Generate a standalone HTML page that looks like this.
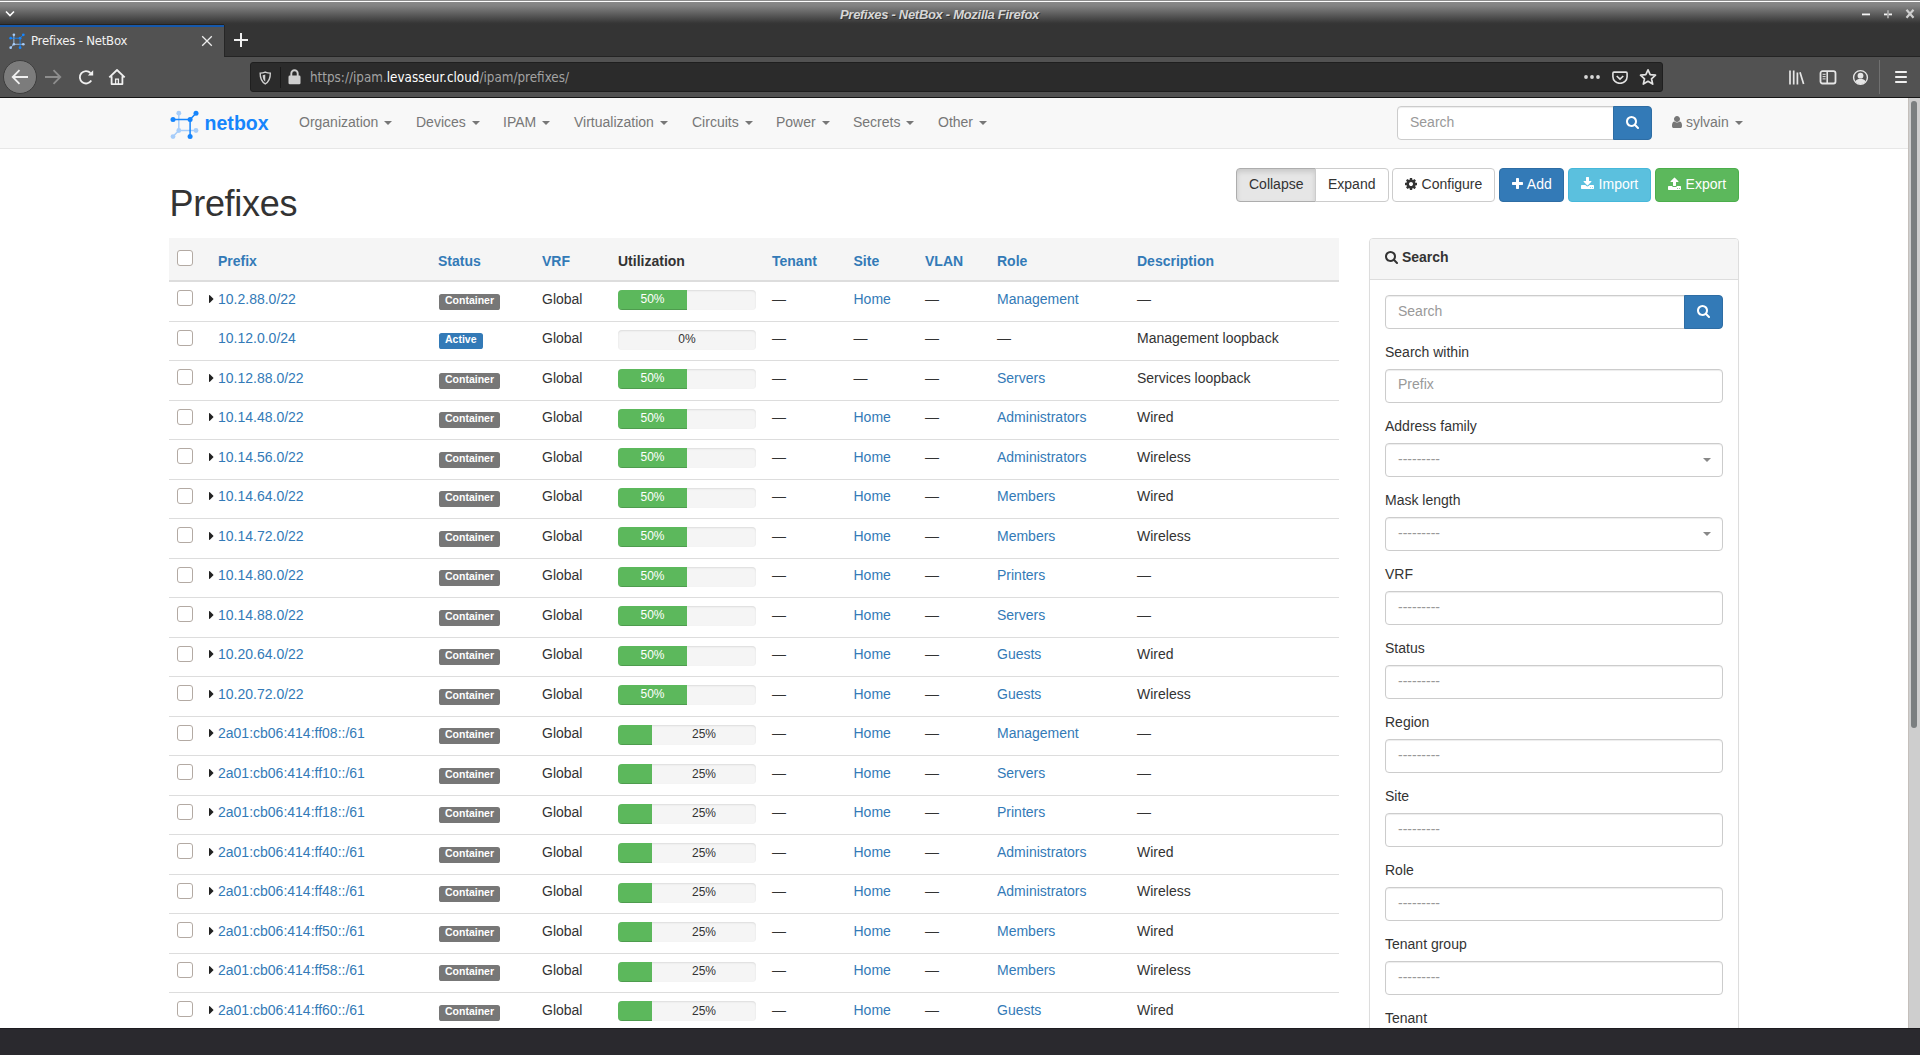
<!DOCTYPE html>
<html lang="en"><head><meta charset="utf-8"><title>Prefixes - NetBox</title>
<style>
*{box-sizing:border-box}
html,body{margin:0;padding:0}
body{width:1920px;height:1055px;overflow:hidden;position:relative;background:#fff;font-family:"Liberation Sans",sans-serif;font-size:14px;line-height:20px;color:#333}
a{color:#337ab7;text-decoration:none}
svg{display:block}
/* ---------- window chrome ---------- */
#titlebar{position:absolute;left:0;top:0;width:1920px;height:25px;background:linear-gradient(#898989 0px,#898989 2px,#818181 6px,#363636 23px,#343434 25px)}
#titlebar:before{content:"";position:absolute;left:0;top:0;width:100%;height:2px;background:linear-gradient(#8c8c8c 0,#8c8c8c 1px,#fff 1px,#fff 2px)}
#wtitle{position:absolute;left:0;top:6px;width:1879px;text-align:center;font:italic bold 13px/17px "Liberation Sans",sans-serif;color:#d6d6d6;text-shadow:1px 1px 0 #333;letter-spacing:-.3px}
#tabbar{position:absolute;left:0;top:25px;width:1920px;height:32px;background:#343434;z-index:2}
#tab{position:absolute;left:0;top:0;width:224px;height:32px;background:#525252;border-top:2px solid #1558ab;box-shadow:0 -1px 0 #25221e}
#tab .t{position:absolute;left:31px;top:5px;font:13px/18px "DejaVu Sans Condensed","DejaVu Sans","Liberation Sans",sans-serif;letter-spacing:-.2px;color:#f2f2f2;white-space:nowrap}
#toolbar{position:absolute;left:0;top:56px;width:1920px;height:41px;background:#525252}
#tbline{position:absolute;left:0;top:97px;width:1920px;height:1px;background:#161616}
#urlbar{position:absolute;left:250px;top:6px;width:1413px;height:30px;background:#2b2b2b;border:1px solid #1f1f1f;border-radius:3px}
#url{position:absolute;left:59px;top:5px;font:13.330px/20px "DejaVu Sans Condensed","DejaVu Sans","Liberation Sans",sans-serif;color:#a3a3a3;white-space:nowrap}
#url b{font-weight:normal;color:#fff}
.ico{position:absolute}
/* ---------- page ---------- */
#viewport{position:absolute;left:0;top:98px;width:1908px;height:930px;overflow:hidden;background:#fff}
#scroll{position:absolute;left:1908px;top:98px;width:12px;height:930px;background:#cecece;border-left:1px solid #c4bfbb}
#scroll i{position:absolute;left:2px;top:3px;width:6px;height:627px;border-radius:3px;background:#7b7f80}
#bottom{position:absolute;left:0;top:1028px;width:1920px;height:27px;background:#2a292e;border-top:1px solid #1d1c20}
#nav{position:absolute;left:0;top:0;width:1908px;height:51px;background:#f8f8f8;border-bottom:1px solid #e7e7e7}
#nav .m{position:absolute;top:14px;color:#777;white-space:nowrap}
.caret{display:inline-block;width:0;height:0;margin-left:2px;vertical-align:middle;border-top:4px solid;border-right:4px solid transparent;border-left:4px solid transparent}
#brand{position:absolute;left:204.500px;top:11px;font:bold 19.500px/28px "Liberation Sans",sans-serif;color:#1685fc;letter-spacing:.05px}
#nsearch{position:absolute;left:1397px;top:8px;width:217px;height:34px;border:1px solid #ccc;border-radius:4px 0 0 4px;background:#fff;box-shadow:inset 0 1px 1px rgba(0,0,0,.075);color:#999;padding:5px 12px 7px}
#nsbtn{position:absolute;left:1613px;top:8px;width:39px;height:34px;background:#337ab7;border:1px solid #2e6da4;border-radius:0 4px 4px 0}
h1.title{position:absolute;left:169.500px;top:85.500px;letter-spacing:-.3px;margin:0;font-size:36px;line-height:40px;font-weight:500;font-weight:normal;color:#333}
.btns{position:absolute;top:70px;left:0}
.btn{position:absolute;top:0;height:34px;padding:5px 12px 7px;border:1px solid transparent;border-radius:4px;white-space:nowrap;font-size:14px;line-height:20px;color:#333}
.fa{display:inline-block;vertical-align:-2px;fill:currentColor}
.btn .fa{margin-right:.7px}
.btn-default{background:#fff;border-color:#ccc}
.btn-default.active{background:#e6e6e6;border-color:#adadad;box-shadow:inset 0 3px 5px rgba(0,0,0,.125)}
.btn-primary{background:#337ab7;border-color:#2e6da4;color:#fff}
.btn-info{background:#5bc0de;border-color:#46b8da;color:#fff}
.btn-success{background:#5cb85c;border-color:#4cae4c;color:#fff}
/* ---------- table ---------- */
#tbl{position:absolute;left:169px;top:0;width:1170px}
.thead{position:absolute;left:0;top:140px;width:1170px;height:44px;background:#f5f5f5;border-bottom:2px solid #ddd;font-weight:bold}
.tr{position:absolute;left:0;width:1170px;border-bottom:1px solid #ddd}
.c{position:absolute;top:7px;white-space:nowrap}
.tr.odd .c{top:6px}
.tr .c.cb,.tr .c.ut,.tr.odd .c.cb,.tr.odd .c.ut{top:8px}
.thead .c{top:13px}
.c.cb{left:8px}
.c.pfx{left:49px}
.c.st{left:269px}
.c.vrf{left:373px}
.c.ut{left:449px;width:138px}
.c.ten{left:603px}
.c.site{left:684.500px}
.c.vlan{left:756px}
.c.role{left:828px}
.c.desc{left:968px}
.chk{display:block;width:16px;height:16px;border:1px solid #b3aaa3;border-radius:3px;background:#fff;margin-top:0px;box-shadow:inset 0 0 0 1px rgba(255,255,255,.8)}
.thead .chk{margin-top:-1px}
.caret-r{position:absolute;left:-9px;top:5px;width:0;height:0;border-left:5px solid #222;border-top:5px solid transparent;border-bottom:5px solid transparent}
.label{display:block;position:absolute;left:1px;top:5px;padding:1px 6px 4.7px;font-size:10.5px;font-weight:bold;line-height:10.5px;color:#fff;border-radius:2.6px}
.label-default{background:#777}
.label-primary{background:#337ab7}
.progress{position:relative;width:138px;height:20px;background:#f5f5f5;border-radius:4px;box-shadow:inset 0 1px 2px rgba(0,0,0,.1);overflow:hidden;font-size:12px;line-height:19px;text-align:center}
.progress .bar{position:absolute;left:0;top:0;height:20px;background:#5cb85c;color:#fff;box-shadow:inset 0 -1px 0 rgba(0,0,0,.15)}
.progress .zero{color:#333}
.progress .p25{position:absolute;left:74px;top:1px;color:#333}
.tr.odd .progress .p25{top:0}
/* ---------- side panel ---------- */
#panel{position:absolute;left:1369px;top:140px;width:370px;height:900px;border:1px solid #ddd;border-radius:4px;background:#fff;box-shadow:0 1px 1px rgba(0,0,0,.05)}
#panel .hd{height:41px;background:#f5f5f5;border-bottom:1px solid #ddd;border-radius:3px 3px 0 0;padding:8px 15px 12px;font-weight:bold;color:#333}
#panel .fg{position:absolute;left:15px;width:338px}
#panel label{display:block;position:absolute;left:0;top:-2px;font-weight:normal;white-space:nowrap}
.inp{position:absolute;left:0;top:25px;width:338px;height:34px;border:1px solid #ccc;border-radius:4px;background:#fff;box-shadow:inset 0 1px 1px rgba(0,0,0,.075);padding:4px 12px 8px;color:#999}
.inp .arr{position:absolute;right:11px;top:14px;width:0;height:0;border-top:4px solid #888;border-left:4px solid transparent;border-right:4px solid transparent}

</style></head>
<body>
<svg width="0" height="0" style="position:absolute">
<defs>
<path id="fa-search" d="M1216 832q0-185-131.500-316.500t-316.500-131.500-316.500 131.500-131.500 316.500 131.500 316.500 316.500 131.500 316.500-131.500 131.500-316.500zM1728 1664q0 52-38 90t-90 38q-54 0-90-38l-343-342q-179 124-399 124-143 0-273.500-55.500t-225-150-150-225-55.500-273.500 55.500-273.500 150-225 225-150 273.500-55.500 273.500 55.500 225 150 150 225 55.500 273.500q0 220-124 399l343 343q37 37 37 90z"/>
<path id="fa-plus" d="M1600 736v192q0 40-28 68t-68 28h-416v416q0 40-28 68t-68 28h-192q-40 0-68-28t-28-68v-416h-416q-40 0-68-28t-28-68v-192q0-40 28-68t68-28h416v-416q0-40 28-68t68-28h192q40 0 68 28t28 68v416h416q40 0 68 28t28 68z"/>
<path id="fa-cog" d="M1152 896q0-106-75-181t-181-75-181 75-75 181 75 181 181 75 181-75 75-181zm512-109v222q0 12-8 23t-20 13l-185 28q-19 54-39 91 35 50 107 138 10 12 10 25t-9 23q-27 37-99 108t-94 71q-12 0-26-9l-138-108q-44 23-91 38-16 136-29 186-7 28-36 28h-222q-14 0-24.500-8.500t-11.500-21.500l-28-184q-49-16-90-37l-141 107q-10 9-25 9-14 0-25-11-126-114-165-168-7-10-7-23 0-12 8-23 15-21 51-66.500t54-70.500q-27-50-41-99l-183-27q-13-2-21-12.500t-8-23.500v-222q0-12 8-23t19-13l186-28q14-46 39-92-40-57-107-138-10-12-10-24 0-10 9-23 26-36 98.500-107.500t94.500-71.500q13 0 26 10l138 107q44-23 91-38 16-136 29-186 7-28 36-28h222q14 0 24.500 8.500t11.500 21.500l28 184q49 16 90 37l142-107q9-9 24-9 13 0 25 10 129 119 165 170 7 8 7 22 0 12-8 23-15 21-51 66.500t-54 70.500q26 50 41 98l183 28q13 2 21 12.500t8 23.500z"/>
<path id="fa-download" d="M1344 1344q0-26-19-45t-45-19-45 19-19 45 19 45 45 19 45-19 19-45zm256 0q0-26-19-45t-45-19-45 19-19 45 19 45 45 19 45-19 19-45zm128-224v320q0 40-28 68t-68 28h-1472q-40 0-68-28t-28-68v-320q0-40 28-68t68-28h465l135 136q58 56 136 56t136-56l136-136h464q40 0 68 28t28 68zm-325-569q17 41-14 70l-448 448q-18 19-45 19t-45-19l-448-448q-31-29-14-70 17-39 59-39h256v-448q0-26 19-45t45-19h256q26 0 45 19t19 45v448h256q42 0 59 39z"/>
<path id="fa-upload" d="M1344 1472q0-26-19-45t-45-19-45 19-19 45 19 45 45 19 45-19 19-45zm256 0q0-26-19-45t-45-19-45 19-19 45 19 45 45 19 45-19 19-45zm128-224v320q0 40-28 68t-68 28h-1472q-40 0-68-28t-28-68v-320q0-40 28-68t68-28h427q21 56 70.500 92t110.500 36h256q61 0 110.500-36t70.500-92h427q40 0 68 28t28 68zm-325-648q-17 40-59 40h-256v448q0 26-19 45t-45 19h-256q-26 0-45-19t-19-45v-448h-256q-42 0-59-40-17-39 14-69l448-448q18-19 45-19t45 19l448 448q31 30 14 69z"/>
<path id="fa-user" d="M1536 1399q0 109-62.500 187t-150.500 78h-854q-88 0-150.500-78t-62.500-187q0-85 8.500-160.500t31.500-152 58.500-131 94-89 134.500-34.500q131 128 313 128t313-128q76 0 134.500 34.500t94 89 58.500 131 31.500 152 8.500 160.500zm-256-887q0 159-112.500 271.500t-271.500 112.500-271.500-112.500-112.500-271.500 112.500-271.500 271.500-112.500 271.500 112.500 112.500 271.500z"/>
<path id="fa-caretr" d="M1152 896q0 26-19 45l-448 448q-19 19-45 19t-45-19-19-45v-896q0-26 19-45t45-19 45 19l448 448q19 19 19 45z"/>
<g id="i-logo"><g stroke-width="1.500" fill="none"><path d="M8.800 3.200v17.300h17.200M8.800 20.500l-5.800 6.100" stroke="#a6cdfa"/><path d="M3 9.500h17.100v17.100M20.100 9.500l5.900-6.300" stroke="#1685fc"/></g><g fill="#a6cdfa"><circle cx="8.800" cy="3.200" r="2.400"/><circle cx="8.800" cy="20.500" r="2.400"/><circle cx="26" cy="20.500" r="2.400"/><circle cx="3" cy="26.600" r="2.400"/></g><g fill="#1685fc"><circle cx="3" cy="9.500" r="2.500"/><circle cx="20.100" cy="9.500" r="2.500"/><circle cx="26" cy="3.200" r="2.500"/><circle cx="20.100" cy="26.600" r="2.500"/></g></g>
</defs>
</svg>
<div id="titlebar">
<svg class="ico" style="left:4px;top:9px" width="12" height="10" viewBox="0 0 12 10"><path d="M2 2.500l4 4l4-4" fill="none" stroke="#fff" stroke-width="1.600"/></svg>
<div id="wtitle">Prefixes - NetBox - Mozilla Firefox</div>
<svg class="ico" style="left:1858px;top:8px" width="60" height="12" viewBox="0 0 60 12"><g fill="none" stroke="#f4f4f4" stroke-width="1.800"><path d="M4 6.400h8"/><path d="M26 6.400h8"/><path d="M30 2.300v8" stroke="#a8a8a8"/><path d="M48.500 1.800l7 8M55.500 1.800l-7 8" stroke="#cfcfcf" stroke-width="2.200"/></g></svg>
</div>
<div id="tabbar">
<div id="tab">
<svg class="ico" style="left:9px;top:6px" width="16" height="16.500" viewBox="0 0 29 30"><use href="#i-logo"/></svg>
<span class="t">Prefixes - NetBox</span>
<svg class="ico" style="left:201px;top:8px" width="12" height="12" viewBox="0 0 12 12"><path d="M1.200 1.200l9.600 9.600M10.800 1.200l-9.600 9.600" stroke="#ededed" stroke-width="1.300" fill="none"/></svg>
</div>
<i style="position:absolute;left:224px;top:0;width:1px;height:32px;background:#262626"></i>
<svg class="ico" style="left:233px;top:7px" width="16" height="16" viewBox="0 0 16 16"><path d="M1 8h14M8 1v14" stroke="#f0f0f0" stroke-width="2" fill="none"/></svg>
<i style="position:absolute;left:225px;top:31px;width:1695px;height:1px;background:#242424"></i>
</div>
<div id="toolbar">
<i style="position:absolute;left:3px;top:4px;width:34px;height:34px;border-radius:50%;background:#7c7c7c;border:1px solid #3d3d3d"></i>
<svg class="ico" style="left:11px;top:13px" width="18" height="16" viewBox="0 0 18 16"><path d="M17 8h-15M8.500 1.200l-6.800 6.800l6.800 6.800" fill="none" stroke="#f0f0f0" stroke-width="1.800"/></svg>
<svg class="ico" style="left:44px;top:13px" width="18" height="16" viewBox="0 0 18 16"><path d="M1 8h15M9.500 1.200l6.800 6.800l-6.800 6.800" fill="none" stroke="#8d8d8d" stroke-width="1.800"/></svg>
<svg class="ico" style="left:77px;top:12px" width="18" height="18" viewBox="0 0 18 18"><path d="M14.300 12.600a6.200 6.200 0 1 1-.8-7.600" fill="none" stroke="#f0f0f0" stroke-width="1.800"/><path d="M16.200 2.200v5.400h-5.400z" fill="#f0f0f0"/></svg>
<svg class="ico" style="left:108px;top:12px" width="18" height="18" viewBox="0 0 18 18"><path d="M1.300 9.300l7.700-7.300l7.700 7.300M3.600 8.200v7.900h10.800v-7.900" fill="none" stroke="#f0f0f0" stroke-width="1.800" stroke-linejoin="round"/><path d="M7.600 16v-4.800h2.800v4.800" fill="none" stroke="#f0f0f0" stroke-width="1.300"/></svg>
<div id="urlbar">
<svg class="ico" style="left:8px;top:8px" width="12.500" height="14" viewBox="0 0 14 16"><path d="M7 1.200c2 .9 3.800 1.200 5.800 1.200c.1 5.600-1.500 10-5.800 12.400c-4.300-2.400-5.900-6.800-5.800-12.400c2 0 3.800-.3 5.800-1.200z" fill="none" stroke="#cfcfcf" stroke-width="1.600"/><path d="M7 4v8.200c-2-1.400-2.900-4-3-7.400c1.100-.1 2-.3 3-.8z" fill="#cfcfcf"/></svg>
<i style="position:absolute;left:29px;top:4px;width:1px;height:21px;background:#1a1a1a"></i>
<svg class="ico" style="left:37px;top:6px" width="13" height="16" viewBox="0 0 13 16"><path d="M3.300 7v-2.500a3.200 3.200 0 0 1 6.400 0v2.500" fill="none" stroke="#cfcfcf" stroke-width="1.900"/><rect x=".5" y="6.600" width="12" height="8.600" rx="1.300" fill="#cfcfcf"/></svg>
<span id="url">https://ipam.<b>levasseur.cloud</b>/ipam/prefixes/</span>
<svg class="ico" style="left:1332px;top:11px" width="20" height="6" viewBox="0 0 20 6"><g fill="#d8d8d8"><circle cx="3" cy="3" r="1.900"/><circle cx="9" cy="3" r="1.900"/><circle cx="15" cy="3" r="1.900"/></g></svg>
<svg class="ico" style="left:1361px;top:8px" width="16" height="13.300" viewBox="0 0 18 15"><path d="M2.200 1.300h13.600a1.200 1.200 0 0 1 1.200 1.200v4a8 7.400 0 0 1-16 0v-4a1.200 1.200 0 0 1 1.200-1.200z" fill="none" stroke="#e2e2e2" stroke-width="1.800"/><path d="M5.300 5.600l3.700 3.600l3.700-3.600" fill="none" stroke="#e2e2e2" stroke-width="1.800"/></svg>
<svg class="ico" style="left:1388px;top:5px" width="18" height="18" viewBox="0 0 18 18"><path d="M9 1.800l2.200 4.900l5.300.5l-4 3.600l1.200 5.300l-4.700-2.800l-4.700 2.800l1.200-5.300l-4-3.600l5.300-.5z" fill="none" stroke="#e2e2e2" stroke-width="1.700" stroke-linejoin="round"/></svg>
</div>
<svg class="ico" style="left:1788px;top:14px" width="18" height="15" viewBox="0 0 18 15"><path d="M2 .4v14M5.700 .4v14M9.400 2.400v12M12 2.200l3.600 11.800" fill="none" stroke="#e6e6e6" stroke-width="1.700"/></svg>
<svg class="ico" style="left:1819px;top:14px" width="18" height="15" viewBox="0 0 18 15"><rect x="1.500" y="1.200" width="15" height="12.300" rx="2" fill="none" stroke="#e6e6e6" stroke-width="1.800"/><path d="M8.200 1.200v12.300" stroke="#e6e6e6" stroke-width="1.600"/><path d="M3.600 4.300h3M3.600 6.600h3M3.600 8.900h3" stroke="#e6e6e6" stroke-width="1"/></svg>
<svg class="ico" style="left:1852px;top:13px" width="17" height="17" viewBox="0 0 17 17"><circle cx="8.500" cy="8.500" r="6.900" fill="none" stroke="#e6e6e6" stroke-width="1.400"/><circle cx="8.500" cy="6.700" r="2.900" fill="#e6e6e6"/><path d="M3.300 12.600c1-2 2.800-2.600 5.200-2.600s4.200.6 5.200 2.600a6.600 6.600 0 0 1-10.400 0z" fill="#e6e6e6"/></svg>
<i style="position:absolute;left:1879px;top:4px;width:1px;height:34px;background:#707070"></i>
<svg class="ico" style="left:1894px;top:14px" width="14" height="14" viewBox="0 0 14 14"><path d="M1.200 2h11.600M1.200 7h11.600M1.200 12h11.600" stroke="#f0f0f0" stroke-width="2" fill="none"/></svg>
</div>
<div id="tbline"></div>

<div id="viewport">
<div id="nav">
<svg class="ico" style="left:169.500px;top:12px" width="29" height="30" viewBox="0 0 29 30"><use href="#i-logo"/></svg>
<span id="brand">netbox</span>
<span class="m" style="left:299px">Organization <i class="caret"></i></span>
<span class="m" style="left:416px">Devices <i class="caret"></i></span>
<span class="m" style="left:503px">IPAM <i class="caret"></i></span>
<span class="m" style="left:574px">Virtualization <i class="caret"></i></span>
<span class="m" style="left:692px">Circuits <i class="caret"></i></span>
<span class="m" style="left:776px">Power <i class="caret"></i></span>
<span class="m" style="left:853px">Secrets <i class="caret"></i></span>
<span class="m" style="left:938px">Other <i class="caret"></i></span>
<div id="nsearch">Search</div>
<div id="nsbtn"><svg class="fa" viewBox="64 0 1664 1792" width="13" height="14" style="position:absolute;left:12px;top:8px;fill:#fff"><use href="#fa-search"/></svg></div>
<span class="m" style="left:1672px"><svg class="fa" viewBox="256 0 1280 1792" width="10" height="14" style="fill:#777"><use href="#fa-user"/></svg> sylvain <i class="caret"></i></span>
</div>

<h1 class="title">Prefixes</h1>
<div class="btns">
<a class="btn btn-default active" style="left:1236px;width:80px;border-radius:4px 0 0 4px">Collapse</a><a class="btn btn-default" style="left:1315px;width:74px;border-radius:0 4px 4px 0">Expand</a>
<a class="btn btn-default" style="left:1392px;width:103px"><svg class="fa" viewBox="128 0 1536 1792" width="12" height="14"><use href="#fa-cog"/></svg> Configure</a>
<a class="btn btn-primary" style="left:1499px;width:65px"><svg class="fa" viewBox="192 0 1408 1792" width="11" height="14"><use href="#fa-plus"/></svg> Add</a>
<a class="btn btn-info" style="left:1568px;width:83px"><svg class="fa" viewBox="64 0 1664 1792" width="13" height="14"><use href="#fa-download"/></svg> Import</a>
<a class="btn btn-success" style="left:1655px;width:84px"><svg class="fa" viewBox="64 0 1664 1792" width="13" height="14"><use href="#fa-upload"/></svg> Export</a>
</div>
<div id="tbl">
<div class="thead">
<span class="c cb"><i class="chk"></i></span><span class="c pfx"><a>Prefix</a></span><span class="c st"><a>Status</a></span><span class="c vrf"><a>VRF</a></span><span class="c ut">Utilization</span><span class="c ten"><a>Tenant</a></span><span class="c site"><a>Site</a></span><span class="c vlan"><a>VLAN</a></span><span class="c role"><a>Role</a></span><span class="c desc"><a>Description</a></span>
</div>
<div class="tr" style="top:184px;height:40px">
<span class="c cb"><i class="chk"></i></span><span class="c pfx"><svg class="fa" viewBox="576 0 640 1792" width="5" height="14" style="position:absolute;left:-9px;top:3px;fill:#222"><use href="#fa-caretr"/></svg><a>10.2.88.0/22</a></span><span class="c st"><span class="label label-default">Container</span></span><span class="c vrf">Global</span><span class="c ut"><div class="progress"><div class="bar" style="width:50%">50%</div></div></span><span class="c ten">—</span><span class="c site"><a>Home</a></span><span class="c vlan">—</span><span class="c role"><a>Management</a></span><span class="c desc">—</span>
</div>
<div class="tr odd" style="top:224px;height:39px">
<span class="c cb"><i class="chk"></i></span><span class="c pfx"><a>10.12.0.0/24</a></span><span class="c st"><span class="label label-primary">Active</span></span><span class="c vrf">Global</span><span class="c ut"><div class="progress"><span class="zero">0%</span></div></span><span class="c ten">—</span><span class="c site">—</span><span class="c vlan">—</span><span class="c role">—</span><span class="c desc">Management loopback</span>
</div>
<div class="tr" style="top:263px;height:40px">
<span class="c cb"><i class="chk"></i></span><span class="c pfx"><svg class="fa" viewBox="576 0 640 1792" width="5" height="14" style="position:absolute;left:-9px;top:3px;fill:#222"><use href="#fa-caretr"/></svg><a>10.12.88.0/22</a></span><span class="c st"><span class="label label-default">Container</span></span><span class="c vrf">Global</span><span class="c ut"><div class="progress"><div class="bar" style="width:50%">50%</div></div></span><span class="c ten">—</span><span class="c site">—</span><span class="c vlan">—</span><span class="c role"><a>Servers</a></span><span class="c desc">Services loopback</span>
</div>
<div class="tr odd" style="top:303px;height:39px">
<span class="c cb"><i class="chk"></i></span><span class="c pfx"><svg class="fa" viewBox="576 0 640 1792" width="5" height="14" style="position:absolute;left:-9px;top:3px;fill:#222"><use href="#fa-caretr"/></svg><a>10.14.48.0/22</a></span><span class="c st"><span class="label label-default">Container</span></span><span class="c vrf">Global</span><span class="c ut"><div class="progress"><div class="bar" style="width:50%">50%</div></div></span><span class="c ten">—</span><span class="c site"><a>Home</a></span><span class="c vlan">—</span><span class="c role"><a>Administrators</a></span><span class="c desc">Wired</span>
</div>
<div class="tr" style="top:342px;height:40px">
<span class="c cb"><i class="chk"></i></span><span class="c pfx"><svg class="fa" viewBox="576 0 640 1792" width="5" height="14" style="position:absolute;left:-9px;top:3px;fill:#222"><use href="#fa-caretr"/></svg><a>10.14.56.0/22</a></span><span class="c st"><span class="label label-default">Container</span></span><span class="c vrf">Global</span><span class="c ut"><div class="progress"><div class="bar" style="width:50%">50%</div></div></span><span class="c ten">—</span><span class="c site"><a>Home</a></span><span class="c vlan">—</span><span class="c role"><a>Administrators</a></span><span class="c desc">Wireless</span>
</div>
<div class="tr odd" style="top:382px;height:39px">
<span class="c cb"><i class="chk"></i></span><span class="c pfx"><svg class="fa" viewBox="576 0 640 1792" width="5" height="14" style="position:absolute;left:-9px;top:3px;fill:#222"><use href="#fa-caretr"/></svg><a>10.14.64.0/22</a></span><span class="c st"><span class="label label-default">Container</span></span><span class="c vrf">Global</span><span class="c ut"><div class="progress"><div class="bar" style="width:50%">50%</div></div></span><span class="c ten">—</span><span class="c site"><a>Home</a></span><span class="c vlan">—</span><span class="c role"><a>Members</a></span><span class="c desc">Wired</span>
</div>
<div class="tr" style="top:421px;height:40px">
<span class="c cb"><i class="chk"></i></span><span class="c pfx"><svg class="fa" viewBox="576 0 640 1792" width="5" height="14" style="position:absolute;left:-9px;top:3px;fill:#222"><use href="#fa-caretr"/></svg><a>10.14.72.0/22</a></span><span class="c st"><span class="label label-default">Container</span></span><span class="c vrf">Global</span><span class="c ut"><div class="progress"><div class="bar" style="width:50%">50%</div></div></span><span class="c ten">—</span><span class="c site"><a>Home</a></span><span class="c vlan">—</span><span class="c role"><a>Members</a></span><span class="c desc">Wireless</span>
</div>
<div class="tr odd" style="top:461px;height:39px">
<span class="c cb"><i class="chk"></i></span><span class="c pfx"><svg class="fa" viewBox="576 0 640 1792" width="5" height="14" style="position:absolute;left:-9px;top:3px;fill:#222"><use href="#fa-caretr"/></svg><a>10.14.80.0/22</a></span><span class="c st"><span class="label label-default">Container</span></span><span class="c vrf">Global</span><span class="c ut"><div class="progress"><div class="bar" style="width:50%">50%</div></div></span><span class="c ten">—</span><span class="c site"><a>Home</a></span><span class="c vlan">—</span><span class="c role"><a>Printers</a></span><span class="c desc">—</span>
</div>
<div class="tr" style="top:500px;height:40px">
<span class="c cb"><i class="chk"></i></span><span class="c pfx"><svg class="fa" viewBox="576 0 640 1792" width="5" height="14" style="position:absolute;left:-9px;top:3px;fill:#222"><use href="#fa-caretr"/></svg><a>10.14.88.0/22</a></span><span class="c st"><span class="label label-default">Container</span></span><span class="c vrf">Global</span><span class="c ut"><div class="progress"><div class="bar" style="width:50%">50%</div></div></span><span class="c ten">—</span><span class="c site"><a>Home</a></span><span class="c vlan">—</span><span class="c role"><a>Servers</a></span><span class="c desc">—</span>
</div>
<div class="tr odd" style="top:540px;height:39px">
<span class="c cb"><i class="chk"></i></span><span class="c pfx"><svg class="fa" viewBox="576 0 640 1792" width="5" height="14" style="position:absolute;left:-9px;top:3px;fill:#222"><use href="#fa-caretr"/></svg><a>10.20.64.0/22</a></span><span class="c st"><span class="label label-default">Container</span></span><span class="c vrf">Global</span><span class="c ut"><div class="progress"><div class="bar" style="width:50%">50%</div></div></span><span class="c ten">—</span><span class="c site"><a>Home</a></span><span class="c vlan">—</span><span class="c role"><a>Guests</a></span><span class="c desc">Wired</span>
</div>
<div class="tr" style="top:579px;height:40px">
<span class="c cb"><i class="chk"></i></span><span class="c pfx"><svg class="fa" viewBox="576 0 640 1792" width="5" height="14" style="position:absolute;left:-9px;top:3px;fill:#222"><use href="#fa-caretr"/></svg><a>10.20.72.0/22</a></span><span class="c st"><span class="label label-default">Container</span></span><span class="c vrf">Global</span><span class="c ut"><div class="progress"><div class="bar" style="width:50%">50%</div></div></span><span class="c ten">—</span><span class="c site"><a>Home</a></span><span class="c vlan">—</span><span class="c role"><a>Guests</a></span><span class="c desc">Wireless</span>
</div>
<div class="tr odd" style="top:619px;height:39px">
<span class="c cb"><i class="chk"></i></span><span class="c pfx"><svg class="fa" viewBox="576 0 640 1792" width="5" height="14" style="position:absolute;left:-9px;top:3px;fill:#222"><use href="#fa-caretr"/></svg><a>2a01:cb06:414:ff08::/61</a></span><span class="c st"><span class="label label-default">Container</span></span><span class="c vrf">Global</span><span class="c ut"><div class="progress"><div class="bar" style="width:34px"></div><span class="p25">25%</span></div></span><span class="c ten">—</span><span class="c site"><a>Home</a></span><span class="c vlan">—</span><span class="c role"><a>Management</a></span><span class="c desc">—</span>
</div>
<div class="tr" style="top:658px;height:40px">
<span class="c cb"><i class="chk"></i></span><span class="c pfx"><svg class="fa" viewBox="576 0 640 1792" width="5" height="14" style="position:absolute;left:-9px;top:3px;fill:#222"><use href="#fa-caretr"/></svg><a>2a01:cb06:414:ff10::/61</a></span><span class="c st"><span class="label label-default">Container</span></span><span class="c vrf">Global</span><span class="c ut"><div class="progress"><div class="bar" style="width:34px"></div><span class="p25">25%</span></div></span><span class="c ten">—</span><span class="c site"><a>Home</a></span><span class="c vlan">—</span><span class="c role"><a>Servers</a></span><span class="c desc">—</span>
</div>
<div class="tr odd" style="top:698px;height:39px">
<span class="c cb"><i class="chk"></i></span><span class="c pfx"><svg class="fa" viewBox="576 0 640 1792" width="5" height="14" style="position:absolute;left:-9px;top:3px;fill:#222"><use href="#fa-caretr"/></svg><a>2a01:cb06:414:ff18::/61</a></span><span class="c st"><span class="label label-default">Container</span></span><span class="c vrf">Global</span><span class="c ut"><div class="progress"><div class="bar" style="width:34px"></div><span class="p25">25%</span></div></span><span class="c ten">—</span><span class="c site"><a>Home</a></span><span class="c vlan">—</span><span class="c role"><a>Printers</a></span><span class="c desc">—</span>
</div>
<div class="tr" style="top:737px;height:40px">
<span class="c cb"><i class="chk"></i></span><span class="c pfx"><svg class="fa" viewBox="576 0 640 1792" width="5" height="14" style="position:absolute;left:-9px;top:3px;fill:#222"><use href="#fa-caretr"/></svg><a>2a01:cb06:414:ff40::/61</a></span><span class="c st"><span class="label label-default">Container</span></span><span class="c vrf">Global</span><span class="c ut"><div class="progress"><div class="bar" style="width:34px"></div><span class="p25">25%</span></div></span><span class="c ten">—</span><span class="c site"><a>Home</a></span><span class="c vlan">—</span><span class="c role"><a>Administrators</a></span><span class="c desc">Wired</span>
</div>
<div class="tr odd" style="top:777px;height:39px">
<span class="c cb"><i class="chk"></i></span><span class="c pfx"><svg class="fa" viewBox="576 0 640 1792" width="5" height="14" style="position:absolute;left:-9px;top:3px;fill:#222"><use href="#fa-caretr"/></svg><a>2a01:cb06:414:ff48::/61</a></span><span class="c st"><span class="label label-default">Container</span></span><span class="c vrf">Global</span><span class="c ut"><div class="progress"><div class="bar" style="width:34px"></div><span class="p25">25%</span></div></span><span class="c ten">—</span><span class="c site"><a>Home</a></span><span class="c vlan">—</span><span class="c role"><a>Administrators</a></span><span class="c desc">Wireless</span>
</div>
<div class="tr" style="top:816px;height:40px">
<span class="c cb"><i class="chk"></i></span><span class="c pfx"><svg class="fa" viewBox="576 0 640 1792" width="5" height="14" style="position:absolute;left:-9px;top:3px;fill:#222"><use href="#fa-caretr"/></svg><a>2a01:cb06:414:ff50::/61</a></span><span class="c st"><span class="label label-default">Container</span></span><span class="c vrf">Global</span><span class="c ut"><div class="progress"><div class="bar" style="width:34px"></div><span class="p25">25%</span></div></span><span class="c ten">—</span><span class="c site"><a>Home</a></span><span class="c vlan">—</span><span class="c role"><a>Members</a></span><span class="c desc">Wired</span>
</div>
<div class="tr odd" style="top:856px;height:39px">
<span class="c cb"><i class="chk"></i></span><span class="c pfx"><svg class="fa" viewBox="576 0 640 1792" width="5" height="14" style="position:absolute;left:-9px;top:3px;fill:#222"><use href="#fa-caretr"/></svg><a>2a01:cb06:414:ff58::/61</a></span><span class="c st"><span class="label label-default">Container</span></span><span class="c vrf">Global</span><span class="c ut"><div class="progress"><div class="bar" style="width:34px"></div><span class="p25">25%</span></div></span><span class="c ten">—</span><span class="c site"><a>Home</a></span><span class="c vlan">—</span><span class="c role"><a>Members</a></span><span class="c desc">Wireless</span>
</div>
<div class="tr" style="top:895px;height:40px">
<span class="c cb"><i class="chk"></i></span><span class="c pfx"><svg class="fa" viewBox="576 0 640 1792" width="5" height="14" style="position:absolute;left:-9px;top:3px;fill:#222"><use href="#fa-caretr"/></svg><a>2a01:cb06:414:ff60::/61</a></span><span class="c st"><span class="label label-default">Container</span></span><span class="c vrf">Global</span><span class="c ut"><div class="progress"><div class="bar" style="width:34px"></div><span class="p25">25%</span></div></span><span class="c ten">—</span><span class="c site"><a>Home</a></span><span class="c vlan">—</span><span class="c role"><a>Guests</a></span><span class="c desc">Wired</span>
</div>
</div>
<div id="panel">
<div class="hd"><svg class="fa" viewBox="64 0 1664 1792" width="13" height="14" style="fill:#333"><use href="#fa-search"/></svg> Search</div>
<div class="fg" style="top:56px"><div class="inp" style="top:0;width:300px;border-radius:4px 0 0 4px;padding-top:5px">Search</div><div style="position:absolute;left:299px;top:0;width:39px;height:34px;background:#337ab7;border:1px solid #2e6da4;border-radius:0 4px 4px 0"><svg class="fa" viewBox="64 0 1664 1792" width="13" height="14" style="position:absolute;left:12px;top:8px;fill:#fff"><use href="#fa-search"/></svg></div></div>
<div class="fg" style="top:105px"><label>Search within</label><div class="inp">Prefix</div></div>
<div class="fg" style="top:179px"><label>Address family</label><div class="inp" style="padding-top:5px">---------<i class="arr"></i></div></div>
<div class="fg" style="top:253px"><label>Mask length</label><div class="inp" style="padding-top:5px">---------<i class="arr"></i></div></div>
<div class="fg" style="top:327px"><label>VRF</label><div class="inp" style="padding-top:5px">---------</div></div>
<div class="fg" style="top:401px"><label>Status</label><div class="inp" style="padding-top:5px">---------</div></div>
<div class="fg" style="top:475px"><label>Region</label><div class="inp" style="padding-top:5px">---------</div></div>
<div class="fg" style="top:549px"><label>Site</label><div class="inp" style="padding-top:5px">---------</div></div>
<div class="fg" style="top:623px"><label>Role</label><div class="inp" style="padding-top:5px">---------</div></div>
<div class="fg" style="top:697px"><label>Tenant group</label><div class="inp" style="padding-top:5px">---------</div></div>
<div class="fg" style="top:771px"><label>Tenant</label><div class="inp" style="padding-top:5px">---------</div></div>
</div>

</div>
<div id="scroll"><i></i></div>
<div id="bottom"></div>
</body></html>
